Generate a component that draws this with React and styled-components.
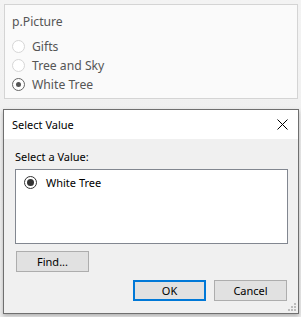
import React from 'react';
import styled, { createGlobalStyle } from 'styled-components';

const GlobalStyle = createGlobalStyle`
   html, body {
      margin: 0;
      padding: 0;
      background: #f0f0f0;
   }
   body {
      font-family: 'Segoe UI', 'Noto Sans', 'Open Sans', sans-serif;
   }
`;

const Page = styled.div`
   width: 301px;
   height: 317px;
   overflow: hidden;
   background: linear-gradient(#f3f3f3, #ececec);
   display: flex;
   flex-direction: column;
   padding-top: 4px;
   box-sizing: border-box;
`;

const FilterPanel = styled.div`
   margin-left: 4px;
   width: 294px;
   height: 95px;
   box-sizing: border-box;
   background: #fafafa;
   border: 1px solid #d4d4d4;
   padding: 8px 0 0 7px;
`;

const FilterTitle = styled.div`
   font-size: 12.2px;
   line-height: 18px;
   color: #555;
   margin-bottom: 6px;
`;

const FilterRow = styled.div`
   display: flex;
   align-items: center;
   height: 19px;
   gap: 7px;
   font-size: 12.2px;
   color: #555;
`;

const TabRadio = styled.span`
   width: 13px;
   height: 13px;
   box-sizing: border-box;
   border-radius: 50%;
   border: 1px solid ${p => (p.checked ? '#666' : '#d6d6d6')};
   background: #fff;
   display: flex;
   align-items: center;
   justify-content: center;
   &::after {
      content: '';
      width: 5px;
      height: 5px;
      border-radius: 50%;
      background: ${p => (p.checked ? '#555' : 'transparent')};
   }
`;

const Dialog = styled.div`
   margin: 10px 0 0 3px;
   width: 296px;
   height: 205px;
   box-sizing: border-box;
   border: 1px solid #6f6f6f;
   background: #f0f0f0;
   box-shadow: 0 2px 4px rgba(0, 0, 0, 0.25);
   display: flex;
   flex-direction: column;
   font-size: 11px;
   color: #000;
`;

const TitleBar = styled.div`
   height: 29px;
   background: #fff;
   display: flex;
   align-items: center;
   justify-content: space-between;
   padding: 0 10px 0 8px;
`;

const TitleText = styled.span`
   font-size: 11px;
   margin-top: -1px;
`;

const Body = styled.div`
   flex: 1;
   display: flex;
   flex-direction: column;
   padding: 10px 10px 0 11px;
   position: relative;
`;

const Label = styled.div`
   line-height: 16px;
   margin-bottom: 4px;
`;

const ListBox = styled.div`
   height: 75px;
   box-sizing: border-box;
   background: #fff;
   border: 1px solid #828790;
   padding: 4px 0 0 8px;
`;

const ListItem = styled.div`
   display: flex;
   align-items: center;
   gap: 9px;
   height: 16px;
`;

const WinRadio = styled.span`
   width: 13px;
   height: 13px;
   box-sizing: border-box;
   border-radius: 50%;
   border: 1px solid #333;
   background: #fff;
   display: flex;
   align-items: center;
   justify-content: center;
   &::after {
      content: '';
      width: 7px;
      height: 7px;
      border-radius: 50%;
      background: #333;
   }
`;

const Button = styled.button`
   width: 73px;
   height: 21px;
   box-sizing: border-box;
   font-family: inherit;
   font-size: 11px;
   color: #000;
   background: #e1e1e1;
   border: ${p => (p.primary ? '2px solid #0078d7' : '1px solid #adadad')};
   padding: 0;
   margin: 0;
`;

const FindRow = styled.div`
   margin-top: 7px;
   padding-left: 1px;
`;

const ActionRow = styled.div`
   margin-top: 8px;
   display: flex;
   justify-content: flex-end;
   gap: 8px;
   padding-right: 1px;
`;

const Grip = styled.svg`
   position: absolute;
   right: 2px;
   bottom: 2px;
`;

const CloseIcon = () => (
   <svg width="11" height="11" viewBox="0 0 11 11">
      <path d="M0.5 0.5 L10.5 10.5 M10.5 0.5 L0.5 10.5" stroke="#000" strokeWidth="1" />
   </svg>
);

const options = [
   { label: 'Gifts', checked: false },
   { label: 'Tree and Sky', checked: false },
   { label: 'White Tree', checked: true },
];

export default function App() {
   return (
      <Page>
         <GlobalStyle />
         <FilterPanel>
            <FilterTitle>p.Picture</FilterTitle>
            {options.map(o => (
               <FilterRow key={o.label}>
                  <TabRadio checked={o.checked} />
                  {o.label}
               </FilterRow>
            ))}
         </FilterPanel>
         <Dialog>
            <TitleBar>
               <TitleText>Select Value</TitleText>
               <CloseIcon />
            </TitleBar>
            <Body>
               <Label>Select a Value:</Label>
               <ListBox>
                  <ListItem>
                     <WinRadio />
                     White Tree
                  </ListItem>
               </ListBox>
               <FindRow>
                  <Button>Find...</Button>
               </FindRow>
               <ActionRow>
                  <Button primary>OK</Button>
                  <Button>Cancel</Button>
               </ActionRow>
               <Grip width="8" height="8" viewBox="0 0 8 8">
                  <rect x="6" y="0" width="2" height="2" fill="#bcbcbc" />
                  <rect x="3" y="3" width="2" height="2" fill="#bcbcbc" />
                  <rect x="6" y="3" width="2" height="2" fill="#bcbcbc" />
                  <rect x="0" y="6" width="2" height="2" fill="#bcbcbc" />
                  <rect x="3" y="6" width="2" height="2" fill="#bcbcbc" />
                  <rect x="6" y="6" width="2" height="2" fill="#bcbcbc" />
               </Grip>
            </Body>
         </Dialog>
      </Page>
   );
}
